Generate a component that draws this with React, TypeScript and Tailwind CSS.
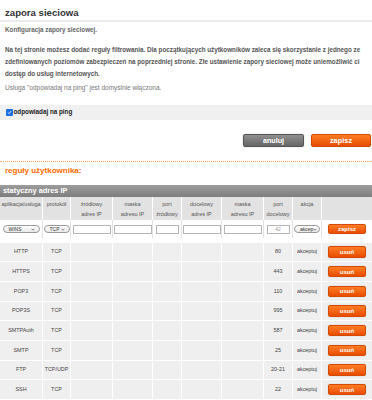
import React from "react";

const cols = "grid grid-cols-[43px_28px_42px_40px_29px_40px_42px_29px_29px_50px]";

const rows: [string, string, string][] = [
  ["HTTP", "TCP", "80"],
  ["HTTPS", "TCP", "443"],
  ["POP3", "TCP", "110"],
  ["POP3S", "TCP", "995"],
  ["SMTPAuth", "TCP", "587"],
  ["SMTP", "TCP", "25"],
  ["FTP", "TCP/UDP", "20-21"],
  ["SSH", "TCP", "22"],
];

function Chevron() {
  return (
    <svg width="4" height="3" viewBox="0 0 4 3" className="shrink-0">
      <polyline points="0.5,0.7 2,2.2 3.5,0.7" fill="none" stroke="#666" strokeWidth="0.8" />
    </svg>
  );
}

function Sel({ label, w }: { label: string; w: string }) {
  return (
    <div
      className={`${w} h-[8px] rounded-full border border-[#9a9a9a] bg-gradient-to-b from-white to-[#e8e8e8] flex items-center justify-between pl-[5px] pr-[4px] text-[5px] leading-none text-[#333]`}
    >
      <span>{label}</span>
      <Chevron />
    </div>
  );
}

function Inp({ w, v }: { w: string; v?: string }) {
  return (
    <div
      className={`${w} h-[9px] border border-[#b5b5b5] bg-white flex items-center justify-center text-[5px] leading-none text-[#9a9a9a]`}
    >
      {v}
    </div>
  );
}

function OrangeBtn({ label, w, h, size }: { label: string; w: string; h: string; size: string }) {
  return (
    <div
      className={`${w} ${h} ${size} rounded-[2px] border border-[#d44a00] bg-gradient-to-b from-[#ff7d24] to-[#e84b00] text-white font-bold flex items-center justify-center leading-none shadow-[0_0_1px_rgba(0,0,0,0.3)]`}
    >
      {label}
    </div>
  );
}

export default function App() {
  const hdr = "border-r border-white flex flex-col items-center pt-[2px] text-[5.5px] leading-[10px] text-[#555] text-center";
  const inCell = "border-r border-[#e2e2e2] flex items-center justify-center";
  const dCell = "border-r border-b border-white bg-[#efefef] flex items-center justify-center text-[5.4px] leading-none text-[#444]";
  return (
    <div className="w-[372px] h-[400px] overflow-hidden bg-white font-['Liberation_Sans',Arial,sans-serif]">
      <div className="pt-[5px] px-[5px] h-[20px] text-[9.6px] leading-[15px] font-bold text-[#333]">zapora sieciowa</div>
      <div className="h-[2px] bg-[#ececec]" />
      <div className="mt-[3.5px] px-[5px] text-[6.3px] leading-[8px] font-bold text-[#666]">Konfiguracja zapory sieciowej.</div>
      <div className="mt-[10.5px] px-[5px] text-[6.3px] leading-[12px] font-bold text-[#555] whitespace-nowrap">
        Na tej stronie możesz dodać reguły filtrowania. Dla początkujących użytkowników zaleca się skorzystanie z jednego ze
        <br />
        zdefiniowanych poziomów zabezpieczeń na poprzedniej stronie. Złe ustawienie zapory sieciowej może uniemożliwić ci
        <br />
        dostęp do usług internetowych.
      </div>
      <div className="mt-[3.5px] px-[5px] text-[6.5px] leading-[8px] text-[#777] whitespace-nowrap">
        Usługa "odpowiadaj na ping" jest domyślnie włączona.
      </div>
      <div className="mt-[13.5px] h-[15px] bg-[#f0f0f0] flex items-center pl-[6px] gap-[1px]">
        <span className="w-[6.5px] h-[6.5px] rounded-[1px] bg-[#1b6fe0] flex items-center justify-center">
          <svg width="5" height="5" viewBox="0 0 5 5">
            <polyline points="1,2.6 2,3.6 4,1.2" fill="none" stroke="white" strokeWidth="0.9" />
          </svg>
        </span>
        <span className="text-[6.3px] leading-none font-bold text-[#222]">odpowiadaj na ping</span>
      </div>
      <div className="mt-[13.5px] h-[13.5px] flex justify-end gap-[7px] pr-[1px]">
        <div className="w-[61px] h-full rounded-[2px] border border-[#555] bg-gradient-to-b from-[#909090] to-[#666] text-white font-bold text-[7.2px] leading-none flex items-center justify-center shadow-[0_0_1px_rgba(0,0,0,0.4)]">
          anuluj
        </div>
        <OrangeBtn label="zapisz" w="w-[60px]" h="h-full" size="text-[7.4px]" />
      </div>
      <div className="mt-[14px] border-t border-dotted border-[#f7a36a]" />
      <div className="mt-[3.5px] px-[5px] text-[8px] leading-[10px] font-bold text-[#ff6a00]">reguły użytkownika:</div>
      <div className="mt-[9.5px] h-[12px] bg-gradient-to-b from-[#9c9c9c] to-[#7e7e7e] flex items-center pl-[3px] text-[7.4px] font-bold text-white leading-none">
        statyczny adres IP
      </div>
      <div className={`${cols} h-[23px] bg-[#e2e2e2]`}>
        <div className={hdr}>aplikacja/usługa</div>
        <div className={hdr}>protokół</div>
        <div className={hdr}><span>źródłowy</span><span>adres IP</span></div>
        <div className={hdr}><span>maska</span><span>adresu IP</span></div>
        <div className={hdr}><span>port</span><span>źródłowy</span></div>
        <div className={hdr}><span>docelowy</span><span>adres IP</span></div>
        <div className={hdr}><span>maska</span><span>adresu IP</span></div>
        <div className={hdr}><span>port</span><span>docelowy</span></div>
        <div className={hdr}>akcja</div>
        <div className="bg-[#e2e2e2]" />
      </div>
      <div className={`${cols} h-[18px] bg-white`}>
        <div className={inCell}><Sel label="WINS" w="w-[37px]" /></div>
        <div className={inCell}><Sel label="TCP" w="w-[26px]" /></div>
        <div className={inCell}><Inp w="w-[38px]" /></div>
        <div className={inCell}><Inp w="w-[38px]" /></div>
        <div className={inCell}><Inp w="w-[23px]" /></div>
        <div className={inCell}><Inp w="w-[38px]" /></div>
        <div className={inCell}><Inp w="w-[38px]" /></div>
        <div className={inCell}><Inp w="w-[23px]" v="42" /></div>
        <div className={inCell}><Sel label="akcep" w="w-[26px]" /></div>
        <div className="flex items-center justify-center">
          <OrangeBtn label="zapisz" w="w-[38px]" h="h-[10px]" size="text-[6px]" />
        </div>
      </div>
      <div className="h-[4.7px]" />
      {rows.map(([app, proto, port]) => (
        <div key={app} className={`${cols} h-[19.66px]`}>
          <div className={dCell}>{app}</div>
          <div className={dCell}>{proto}</div>
          <div className={dCell} />
          <div className={dCell} />
          <div className={dCell} />
          <div className={dCell} />
          <div className={dCell} />
          <div className={dCell}>{port}</div>
          <div className={dCell}>akceptuj</div>
          <div className="border-b border-white bg-[#efefef] flex items-center justify-center">
            <OrangeBtn label="usuń" w="w-[38px]" h="h-[11.5px]" size="text-[6px]" />
          </div>
        </div>
      ))}
    </div>
  );
}
